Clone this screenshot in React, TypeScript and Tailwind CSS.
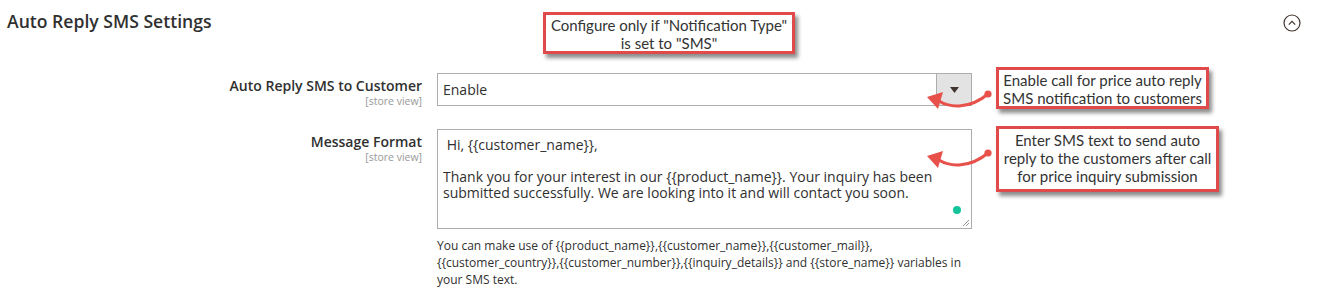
import React from "react"

const callout =
  "absolute bg-white border-[3px] border-[#e04a4a] text-center text-[#333] text-[15px] leading-[18px] shadow-[3px_4px_4px_rgba(0,0,0,0.45)]"

function CurvedArrow({ top }: { top: number }) {
  return (
    <svg
      width="76"
      height="30"
      viewBox="0 0 76 30"
      className="absolute left-[920px]"
      style={{ top }}
      fill="none"
    >
      <path d="M19 16 C 30 23, 50 24, 68 9" stroke="#e8504a" strokeWidth="3" strokeLinecap="round" />
      <polygon points="7,12 23,7 18,24" fill="#e8504a" />
      <circle cx="68" cy="9" r="3.6" fill="#e8504a" />
    </svg>
  )
}

export default function App() {
  return (
    <div className="relative w-[1337px] h-[293px] bg-white overflow-hidden font-['Open_Sans',sans-serif] text-[#303030]">
      {/* Section header */}
      <div className="flex items-center justify-between pl-[7px] pr-[35px] pt-[10px]">
        <h2 className="text-[17.6px] leading-[23px] font-semibold text-[#303030]">Auto Reply SMS Settings</h2>
        <svg width="20" height="20" viewBox="0 0 20 20" fill="none" className="mt-[2px]">
          <circle cx="10" cy="10" r="8" stroke="#41362f" strokeWidth="1.2" />
          <path d="M6.8 11.6 L10 8.4 L13.2 11.6" stroke="#41362f" strokeWidth="1.2" />
        </svg>
      </div>

      {/* Row: Auto Reply SMS to Customer */}
      <div className="flex items-start gap-[15px] mt-[40px]">
        <div className="w-[422px] text-right pt-[3px]">
          <div className="text-[14px] leading-[19px] font-semibold">Auto Reply SMS to Customer</div>
          <div className="text-[10.5px] leading-[12px] text-[#999]">[store view]</div>
        </div>
        <div className="w-[535px] h-[33px] border border-[#adadad] flex items-stretch">
          <div className="flex-1 flex items-center pl-[5px] text-[14px]">Enable</div>
          <div className="w-[35px] bg-[#e3e3e3] border-l border-[#adadad] flex items-center justify-center">
            <svg width="9" height="6" viewBox="0 0 9 6">
              <polygon points="0,0 9,0 4.5,6" fill="#41362f" />
            </svg>
          </div>
        </div>
      </div>

      {/* Row: Message Format */}
      <div className="flex items-start gap-[15px] mt-[22px]">
        <div className="w-[422px] text-right pt-[3px]">
          <div className="text-[14px] leading-[19px] font-semibold">Message Format</div>
          <div className="text-[10.5px] leading-[12px] text-[#999]">[store view]</div>
        </div>
        <div className="w-[535px]">
          <div className="relative h-[100px] border border-[#adadad] px-[5px] pt-[7px] text-[14px] leading-[16px]">
            <div>&nbsp;Hi, {"{{customer_name}}"},</div>
            <div>&nbsp;</div>
            <div>
              Thank you for your interest in our {"{{product_name}}"}. Your inquiry has been submitted successfully. We are
              looking into it and will contact you soon.
            </div>
            <span className="absolute right-[10px] bottom-[14px] w-[8px] h-[8px] rounded-full bg-[#15c39a]" />
            <svg width="8" height="8" viewBox="0 0 8 8" className="absolute right-[1px] bottom-[1px]">
              <path d="M7 1 L1 7 M7 4 L4 7" stroke="#777" strokeWidth="0.8" />
            </svg>
          </div>
          <p className="mt-[8px] text-[12px] leading-[17px] text-[#303030]">
            You can make use of {"{{product_name}}"},{"{{customer_name}}"},{"{{customer_mail}}"},
            <br />
            {"{{customer_country}}"},{"{{customer_number}}"},{"{{inquiry_details}}"} and {"{{store_name}}"} variables in
            <br />
            your SMS text.
          </p>
        </div>
      </div>

      {/* Annotations */}
      <div className={`${callout} left-[543px] top-[12px] w-[252px] h-[42px] pt-[1px] font-['Lato',sans-serif]`}>
        Configure only if "Notification Type"
        <br />
        is set to "SMS"
      </div>
      <div className={`${callout} left-[996px] top-[67px] w-[213px] h-[42px] pt-[1px] font-['Lato',sans-serif]`}>
        Enable call for price auto reply
        <br />
        SMS notification to customers
      </div>
      <div className={`${callout} left-[996px] top-[126px] w-[223px] h-[66px] pt-[2px] font-['Lato',sans-serif]`}>
        Enter SMS text to send auto
        <br />
        reply to the customers after call
        <br />
        for price inquiry submission
      </div>

      <CurvedArrow top={85} />
      <CurvedArrow top={144} />
    </div>
  )
}
